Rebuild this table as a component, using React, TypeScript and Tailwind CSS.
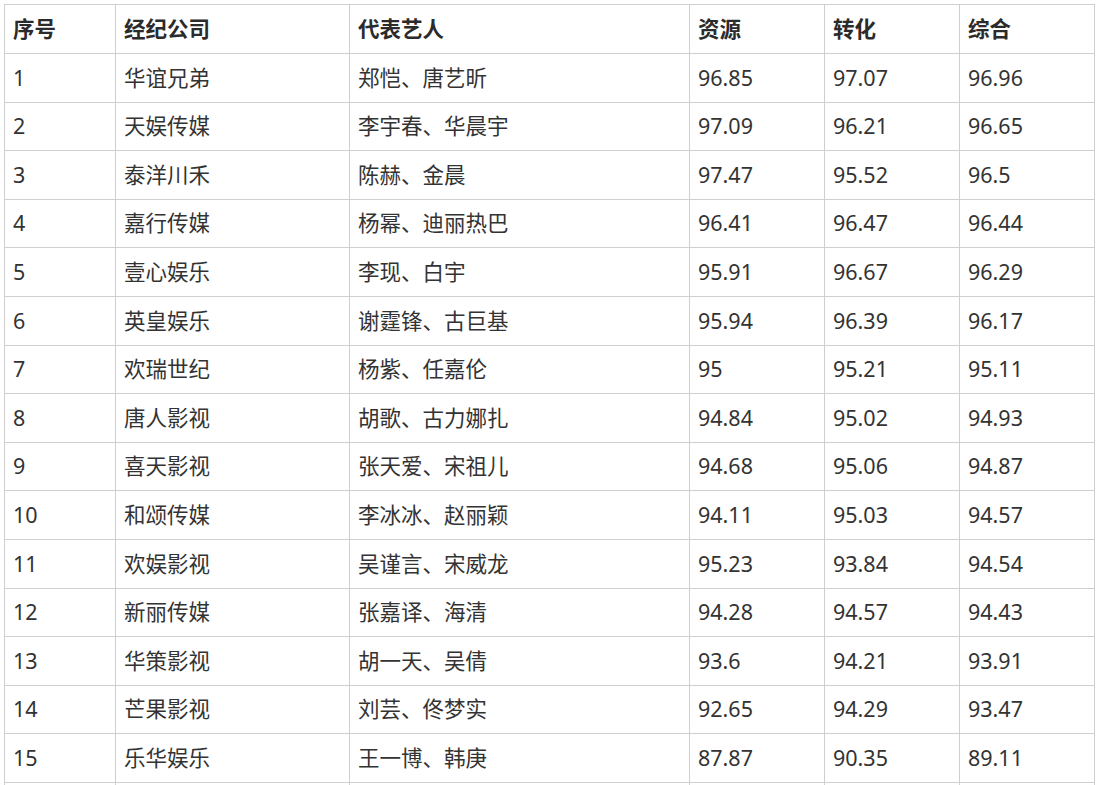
import React from 'react';

const rows: [string, string, string, string, string][] = [
  ['华谊兄弟', '郑恺、唐艺昕', '96.85', '97.07', '96.96'],
  ['天娱传媒', '李宇春、华晨宇', '97.09', '96.21', '96.65'],
  ['泰洋川禾', '陈赫、金晨', '97.47', '95.52', '96.5'],
  ['嘉行传媒', '杨幂、迪丽热巴', '96.41', '96.47', '96.44'],
  ['壹心娱乐', '李现、白宇', '95.91', '96.67', '96.29'],
  ['英皇娱乐', '谢霆锋、古巨基', '95.94', '96.39', '96.17'],
  ['欢瑞世纪', '杨紫、任嘉伦', '95', '95.21', '95.11'],
  ['唐人影视', '胡歌、古力娜扎', '94.84', '95.02', '94.93'],
  ['喜天影视', '张天爱、宋祖儿', '94.68', '95.06', '94.87'],
  ['和颂传媒', '李冰冰、赵丽颖', '94.11', '95.03', '94.57'],
  ['欢娱影视', '吴谨言、宋威龙', '95.23', '93.84', '94.54'],
  ['新丽传媒', '张嘉译、海清', '94.28', '94.57', '94.43'],
  ['华策影视', '胡一天、吴倩', '93.6', '94.21', '93.91'],
  ['芒果影视', '刘芸、佟梦实', '92.65', '94.29', '93.47'],
  ['乐华娱乐', '王一博、韩庚', '87.87', '90.35', '89.11'],
];

const headers = ['序号', '经纪公司', '代表艺人', '资源', '转化', '综合'];
const widths = ['w-[111px]', 'w-[234px]', 'w-[340px]', 'w-[135px]', 'w-[135px]', 'w-[135px]'];

export default function App() {
  return (
    <div
      className="bg-white p-1 text-[#333]"
      style={{ fontFamily: '"Noto Sans", "Noto Sans CJK SC", sans-serif' }}
    >
      <table className="table-fixed border-collapse w-[1090px] text-[21.5px]">
        <thead>
          <tr className="h-[49px]">
            {headers.map((h, i) => (
              <th key={h} className={`${widths[i]} border border-[#cfcfcf] px-2 text-left font-bold text-[#2b2b2b]`}>
                {h}
              </th>
            ))}
          </tr>
        </thead>
        <tbody>
          {rows.map((r, idx) => (
            <tr key={idx} className="h-[48.6px]">
              <td className="border border-[#cfcfcf] px-2">{idx + 1}</td>
              {r.map((c, j) => (
                <td key={j} className="border border-[#cfcfcf] px-2">
                  {c}
                </td>
              ))}
            </tr>
          ))}
          {/* next row, cut off by the viewport */}
          <tr className="h-[48.6px]">
            {headers.map((h) => (
              <td key={h} className="border border-[#cfcfcf] px-2" />
            ))}
          </tr>
        </tbody>
      </table>
    </div>
  );
}
